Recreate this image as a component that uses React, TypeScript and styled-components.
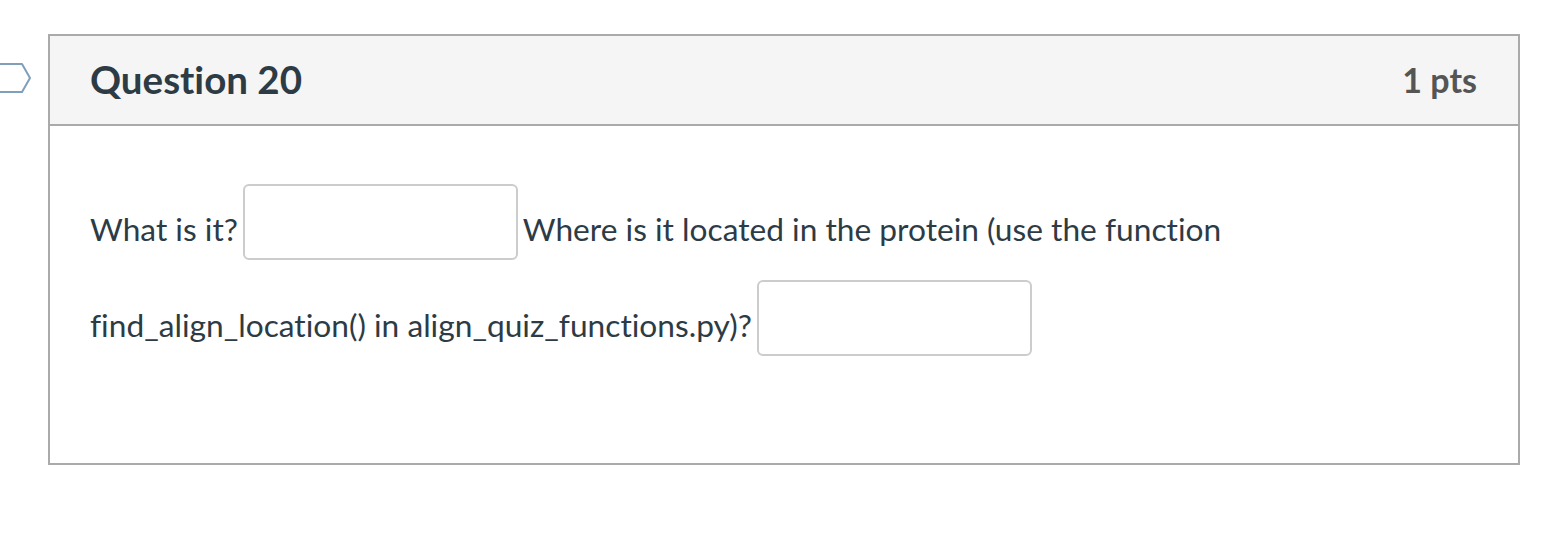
import React from "react";
import styled, { createGlobalStyle } from "styled-components";

const Global = createGlobalStyle`
  html, body { margin: 0; padding: 0; background: #ffffff; }
  body {
    font-family: Lato, "Noto Sans", "Liberation Sans", sans-serif;
    color: #2d3b45;
    font-variant-ligatures: none;
  }
`;

const Page = styled.div`
  padding: 34px 24px 0 48px;
  width: 1544px;
  box-sizing: border-box;
`;

const Card = styled.div`
  position: relative;
  border: 2px solid #aaaaaa;
  background: #ffffff;
`;

const Flag = styled.svg`
  position: absolute;
  left: -50px;
  top: 26px;
  width: 34px;
  height: 32px;
  overflow: visible;
`;

const Header = styled.div`
  display: flex;
  align-items: center;
  justify-content: space-between;
  box-sizing: border-box;
  height: 90px;
  padding: 0 41px 2px 40px;
  background: #f5f5f5;
  border-bottom: 2px solid #aaaaaa;
`;

const Title = styled.h2`
  margin: 0;
  font-size: 38.5px;
  font-weight: 700;
  color: #2d3b45;
`;

const Points = styled.span`
  font-size: 34px;
  font-weight: 700;
  color: #555555;
`;

const Body = styled.div`
  box-sizing: border-box;
  height: 337px;
  padding: 48px 40px 0 40px;
`;

const Text = styled.div`
  font-size: 31.7px;
  line-height: 40px;
  color: #2d3b45;
`;

const BlankSlot = styled.span`
  display: inline-block;
  overflow: hidden;
  margin: 10px -3px;
  vertical-align: -29px;
`;

const Blank = styled.input`
  display: block;
  box-sizing: border-box;
  width: 275px;
  height: 76px;
  border: 2px solid #cccccc;
  border-radius: 6px;
  margin: 0;
  padding: 0 12px;
  background: #ffffff;
  font-family: inherit;
  font-size: 28px;
  color: #2d3b45;
`;

export default function App() {
  return (
    <>
      <Global />
      <Page>
        <Card>
          <Flag viewBox="0 0 34 32">
            <path
              d="M-10 2 L22 2 L30 16 L22 30 L-10 30"
              fill="#ffffff"
              stroke="#7f9fba"
              strokeWidth="2"
              strokeLinejoin="round"
            />
          </Flag>
          <Header>
            <Title>Question 20</Title>
            <Points>1 pts</Points>
          </Header>
          <Body>
            <Text>
              What is it?{" "}
              <BlankSlot>
                <Blank type="text" aria-label="What is it?" />
              </BlankSlot>{" "}
              Where is it located in the protein (use the function find_align_location() in
              align_quiz_functions.py)?{" "}
              <BlankSlot>
                <Blank type="text" aria-label="Location" />
              </BlankSlot>
            </Text>
          </Body>
        </Card>
      </Page>
    </>
  );
}
